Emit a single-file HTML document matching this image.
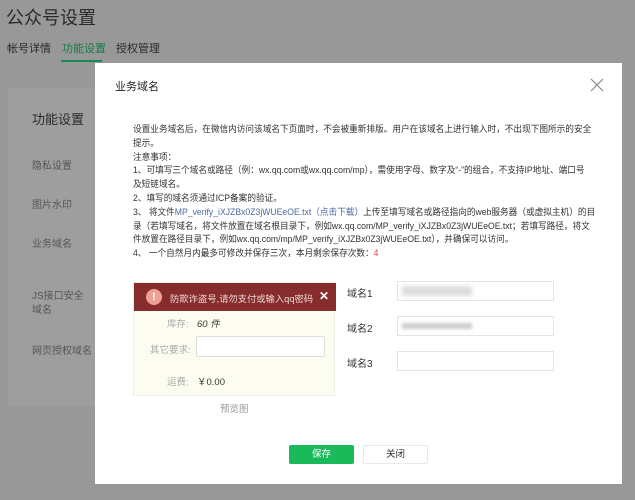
<!DOCTYPE html>
<html><head><meta charset="utf-8"><style>
*{margin:0;padding:0;box-sizing:border-box}
body{width:635px;height:500px;background:#989898;position:relative;overflow:hidden;font-family:"Liberation Sans","Noto Sans CJK SC",sans-serif;color:#222}
.a{position:absolute;white-space:nowrap}
.t div{height:13.8px}
</style></head><body>
<div class="a" style="left:6px;top:4px;font-size:18px;color:#2a2a2a">公众号设置</div>
<div class="a" style="left:7px;top:40px;font-size:11px;color:#2a2a2a">帐号详情</div>
<div class="a" style="left:62px;top:40px;font-size:11px;color:#1a7a4a">功能设置</div>
<div class="a" style="left:61px;top:60px;width:41px;height:2px;background:#1a8a55"></div>
<div class="a" style="left:116px;top:40px;font-size:11px;color:#2a2a2a">授权管理</div>
<div class="a" style="left:8px;top:88px;width:100px;height:318px;background:#9e9e9e"></div>
<div class="a" style="left:32px;top:109px;font-size:13px;color:#2a2a2a">功能设置</div>
<div class="a" style="left:32px;top:157px;font-size:10px;color:#555">隐私设置</div>
<div class="a" style="left:32px;top:196px;font-size:10px;color:#555">图片水印</div>
<div class="a" style="left:32px;top:235px;font-size:10px;color:#555">业务域名</div>
<div class="a" style="left:32px;top:290px;font-size:10px;color:#555;white-space:normal;width:56px;line-height:14px">JS接口安全域名</div>
<div class="a" style="left:32px;top:342px;font-size:10px;color:#555">网页授权域名</div>

<div class="a" style="left:95px;top:63px;width:527px;height:421px;background:#fff">
<div class="a" style="left:20px;top:15px;font-size:11px;color:#222">业务域名</div>
<svg class="a" style="left:495px;top:15px" width="14" height="14"><path d="M1 1L13 13M13 1L1 13" stroke="#888" stroke-width="1.2"/></svg>
<div class="a t" style="left:38px;top:60px;font-size:9.3px;line-height:13.8px;color:#333;transform:scaleX(0.93);transform-origin:0 0">
<div>设置业务域名后，在微信内访问该域名下页面时，不会被重新排版。用户在该域名上进行输入时，不出现下图所示的安全</div>
<div>提示。</div>
<div>注意事项：</div>
<div>1、可填写三个域名或路径（例：wx.qq.com或wx.qq.com/mp），需使用字母、数字及“-”的组合，不支持IP地址、端口号</div>
<div>及短链域名。</div>
<div>2、填写的域名须通过ICP备案的验证。</div>
<div>3、 将文件<span style="color:#4a6aa0">MP_verify_iXJZBx0Z3jWUEeOE.txt（点击下载）</span>上传至填写域名或路径指向的web服务器（或虚拟主机）的目</div>
<div>录（若填写域名，将文件放置在域名根目录下，例如wx.qq.com/MP_verify_iXJZBx0Z3jWUEeOE.txt；若填写路径，将文</div>
<div>件放置在路径目录下，例如wx.qq.com/mp/MP_verify_iXJZBx0Z3jWUEeOE.txt），并确保可以访问。</div>
<div>4、 一个自然月内最多可修改并保存三次，本月剩余保存次数：<span style="color:#e04040">4</span></div>
</div>

<div class="a" style="left:38px;top:219px;width:202px;height:114px;background:#fdfcf0;border:1px solid #eee">
<div class="a" style="left:0;top:0;width:202px;height:28px;background:#862c2c"></div>
<div class="a" style="left:12px;top:6px;width:16px;height:16px;border-radius:50%;background:#f0a090;color:#fff;font-size:11px;font-weight:bold;text-align:center;line-height:16px">!</div>
<div class="a" style="left:36px;top:8px;font-size:9.3px;color:#f0d8d8">防欺诈盗号,请勿支付或输入qq密码</div>
<div class="a" style="left:185px;top:6px;font-size:12px;color:#fff;font-weight:bold">✕</div>
<div class="a" style="left:33px;top:33px;font-size:9.5px;color:#aaa">库存:</div>
<div class="a" style="left:63px;top:33px;font-size:9.5px;color:#333;font-style:italic">60 件</div>
<div class="a" style="left:16px;top:59px;font-size:9.5px;color:#aaa">其它要求:</div>
<div class="a" style="left:62px;top:53px;width:129px;height:21px;background:#fff;border:1px solid #ddd;border-radius:2px"></div>
<div class="a" style="left:33px;top:91px;font-size:9.5px;color:#aaa">运费:</div>
<div class="a" style="left:63px;top:91px;font-size:9.5px;color:#333">￥0.00</div>
</div>
<div class="a" style="left:125px;top:338px;font-size:9.5px;color:#999">预览图</div>

<div class="a" style="left:252px;top:222px;font-size:10px;color:#333">域名1</div>
<div class="a" style="left:252px;top:257px;font-size:10px;color:#333">域名2</div>
<div class="a" style="left:252px;top:292px;font-size:10px;color:#333">域名3</div>
<div class="a" style="left:302px;top:218px;width:157px;height:20px;border:1px solid #e4e4e4"><div class="a" style="left:4px;top:4px;width:70px;height:10px;background:#ddd;filter:blur(2px)"></div></div>
<div class="a" style="left:302px;top:253px;width:157px;height:20px;border:1px solid #e4e4e4"><div class="a" style="left:4px;top:6px;width:70px;height:6px;background:#ccc;filter:blur(1.5px)"></div></div>
<div class="a" style="left:302px;top:288px;width:157px;height:20px;border:1px solid #e4e4e4"></div>

<div class="a" style="left:194px;top:382px;width:65px;height:19px;background:#1aba5a;border-radius:2px;color:#fff;font-size:9.5px;text-align:center;line-height:19px">保存</div>
<div class="a" style="left:268px;top:382px;width:65px;height:19px;border:1px solid #e8e8e8;border-radius:2px;color:#333;font-size:9.5px;text-align:center;line-height:17px">关闭</div>
</div>
</body></html>
